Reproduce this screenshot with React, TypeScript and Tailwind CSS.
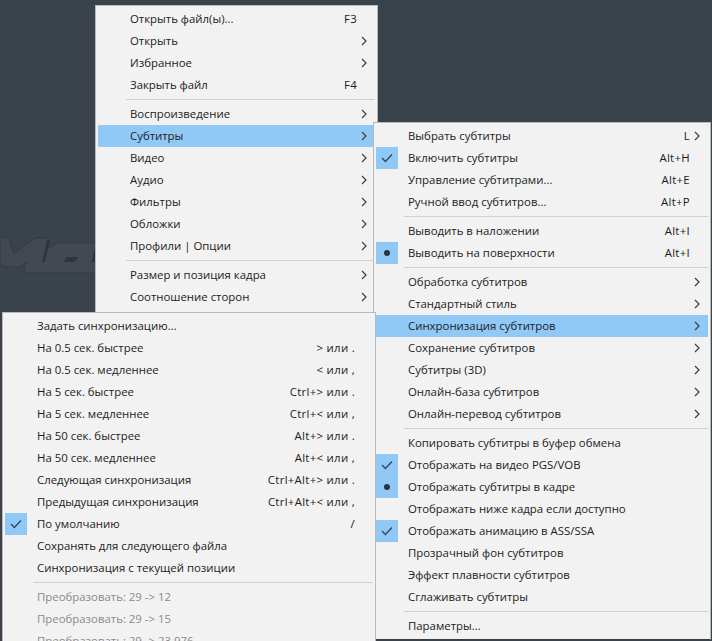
type Item = {
  label?: string;
  keys?: string;
  sub?: boolean;
  mark?: "check" | "dot";
  active?: boolean;
  off?: boolean;
  sep?: boolean;
};

const mainMenu: Item[] = [
  { label: "Открыть файл(ы)...", keys: "F3" },
  { label: "Открыть", sub: true },
  { label: "Избранное", sub: true },
  { label: "Закрыть файл", keys: "F4" },
  { sep: true },
  { label: "Воспроизведение", sub: true },
  { label: "Субтитры", sub: true, active: true },
  { label: "Видео", sub: true },
  { label: "Аудио", sub: true },
  { label: "Фильтры", sub: true },
  { label: "Обложки", sub: true },
  { label: "Профили | Опции", sub: true },
  { sep: true },
  { label: "Размер и позиция кадра", sub: true },
  { label: "Соотношение сторон", sub: true },
];

const subtitleMenu: Item[] = [
  { label: "Выбрать субтитры", keys: "L", sub: true },
  { label: "Включить субтитры", keys: "Alt+H", mark: "check" },
  { label: "Управление субтитрами...", keys: "Alt+E" },
  { label: "Ручной ввод субтитров...", keys: "Alt+P" },
  { sep: true },
  { label: "Выводить в наложении", keys: "Alt+I" },
  { label: "Выводить на поверхности", keys: "Alt+I", mark: "dot" },
  { sep: true },
  { label: "Обработка субтитров", sub: true },
  { label: "Стандартный стиль", sub: true },
  { label: "Синхронизация субтитров", sub: true, active: true },
  { label: "Сохранение субтитров", sub: true },
  { label: "Субтитры (3D)", sub: true },
  { label: "Онлайн-база субтитров", sub: true },
  { label: "Онлайн-перевод субтитров", sub: true },
  { sep: true },
  { label: "Копировать субтитры в буфер обмена" },
  { label: "Отображать на видео PGS/VOB", mark: "check" },
  { label: "Отображать субтитры в кадре", mark: "dot" },
  { label: "Отображать ниже кадра если доступно" },
  { label: "Отображать анимацию в ASS/SSA", mark: "check" },
  { label: "Прозрачный фон субтитров" },
  { label: "Эффект плавности субтитров" },
  { label: "Сглаживать субтитры" },
  { sep: true },
  { label: "Параметры..." },
];

const syncMenu: Item[] = [
  { label: "Задать синхронизацию..." },
  { label: "На 0.5 сек. быстрее", keys: "> или ." },
  { label: "На 0.5 сек. медленнее", keys: "< или ," },
  { label: "На 5 сек. быстрее", keys: "Ctrl+> или ." },
  { label: "На 5 сек. медленнее", keys: "Ctrl+< или ," },
  { label: "На 50 сек. быстрее", keys: "Alt+> или ." },
  { label: "На 50 сек. медленнее", keys: "Alt+< или ," },
  { label: "Следующая синхронизация", keys: "Ctrl+Alt+> или ." },
  { label: "Предыдущая синхронизация", keys: "Ctrl+Alt+< или ," },
  { label: "По умолчанию", keys: "/", mark: "check" },
  { label: "Сохранять для следующего файла" },
  { label: "Синхронизация с текущей позиции" },
  { sep: true },
  { label: "Преобразовать: 29 -> 12", off: true },
  { label: "Преобразовать: 29 -> 15", off: true },
  { label: "Преобразовать: 29 -> 23.976", off: true },
];

function Mark({ type }: { type: "check" | "dot" }) {
  return (
    <span className="flex h-[22px] w-[22px] items-center justify-center bg-[#90c8f6]">
      {type === "check" ? (
        <svg width="12" height="10" viewBox="0 0 12 10" fill="none">
          <path d="M1 5l3.4 3.5L11 1.5" stroke="#34495e" strokeWidth="1.4" />
        </svg>
      ) : (
        <span className="h-[6px] w-[6px] rounded-full bg-[#2a3442]" />
      )}
    </span>
  );
}

function Row({ item }: { item: Item }) {
  if (item.sep) {
    return (
      <div className="flex h-[7px] items-center pl-[28px]">
        <div className="h-px w-full bg-[#d0d0d0]" />
      </div>
    );
  }
  const tone = item.off ? "text-[#8a8a8a]" : "text-[#1c1c1c]";
  return (
    <div className={`flex h-[22px] items-center ${tone} ${item.active ? "bg-[#90c8f6]" : ""}`}>
      <span className="mr-[10px] h-[22px] w-[22px] shrink-0">{item.mark && <Mark type={item.mark} />}</span>
      <span className="flex-1 whitespace-nowrap">{item.label}</span>
      {item.keys && <span className="whitespace-nowrap tracking-[0.3px]">{item.keys}</span>}
      <span className="flex w-[18px] shrink-0 items-center justify-end pr-[8px]">
        {item.sub && (
          <svg width="6" height="10" viewBox="0 0 6 10" fill="none">
            <path d="M1 1l4 4-4 4" stroke="#3f3f3f" strokeWidth="1.2" />
          </svg>
        )}
      </span>
    </div>
  );
}

function Menu({ items, className }: { items: Item[]; className: string }) {
  return (
    <div className={`absolute border border-[#b9b9b9] bg-[#f2f2f2] p-[2px] text-[11.4px] ${className}`}>
      {items.map((item, i) => (
        <Row key={i} item={item} />
      ))}
    </div>
  );
}

export default function App() {
  return (
    <div className="relative h-[641px] w-[712px] overflow-hidden bg-[#3a424c] font-['Open_Sans',sans-serif]">
      {/* faint player logo behind the menus */}
      <svg className="absolute left-0 top-[228px]" width="96" height="54" viewBox="0 228 96 54">
        <path
          d="M0 237H8L14 254 32 240Q35 238 39 238H50L46 250 56 243H96V273H28Q24 273 24 269L26 262Q22 267 17 267H8Q3 267 0 262Z"
          fill="#424953"
          stroke="#343a44"
        />
        <path d="M47 240H50L45 262H42Z" fill="#2f353e" />
        <path d="M66 257H78L75 262H64Z" fill="#2f353e" />
        <path d="M94 250H96V262H92Z" fill="#2f353e" />
      </svg>
      <Menu items={mainMenu} className="left-[95px] top-[5px] h-[320px] w-[283px]" />
      <Menu items={subtitleMenu} className="left-[373px] top-[122px] w-[338px] border-b-[#3c3c3c]" />
      <Menu items={syncMenu} className="left-[2px] top-[312px] w-[374px]" />
    </div>
  );
}
